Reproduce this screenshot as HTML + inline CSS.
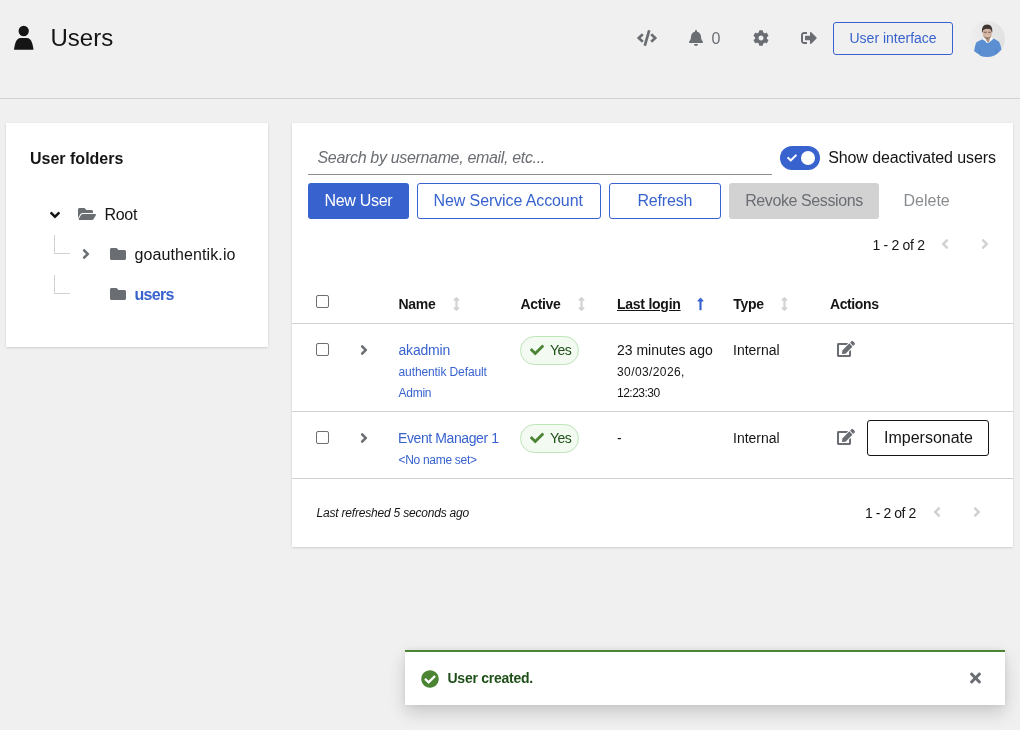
<!DOCTYPE html>
<html lang="en">
<head>
<meta charset="utf-8">
<title>Users</title>
<style>
*{box-sizing:border-box;margin:0;padding:0}
html,body{width:1020px;height:730px;overflow:hidden}
body{background:#f0f0f0;font-family:"Liberation Sans",sans-serif;color:#151515;font-size:16px;position:relative}
.wrap{position:absolute;left:0;top:0;width:1020px;height:730px;will-change:transform}
.abs{position:absolute}
.t{position:absolute;white-space:nowrap}
.hdr{position:absolute;left:0;top:0;width:1020px;height:99px;border-bottom:1px solid #d2d2d2}
.card{position:absolute;background:#fff;box-shadow:0 1px 2px 0 rgba(3,3,3,.12),0 0 2px 0 rgba(3,3,3,.06)}
.btn{position:absolute;border-radius:3px}
.b{font-weight:bold}
.blue{color:#3863ce}
.cb{position:absolute;width:13px;height:13px;border:1px solid #6e6e6e;border-radius:2px;background:#fff}
.hr{position:absolute;left:292px;width:721px;height:1px;background:#d2d2d2}
.pill{position:absolute;left:520px;width:59px;height:29px;border-radius:15px;background:#f3faf2;border:1px solid #bde5b8}
</style>
</head>
<body>
<svg width="0" height="0" style="position:absolute"><defs><symbol id="i-user" viewBox="0 0 448 512"><path d="M224 256c70.700 0 128-57.300 128-128S294.700 0 224 0 96 57.300 96 128s57.300 128 128 128zm89.600 32h-16.700c-22.200 10.200-46.900 16-72.900 16s-50.600-5.800-72.900-16h-16.700C60.200 288 0 348.200 0 422.400V464c0 26.500 21.500 48 48 48h352c26.500 0 48-21.500 48-48v-41.600c0-74.200-60.200-134.400-134.400-134.400z"/></symbol><symbol id="i-code" viewBox="0 0 640 512"><path d="M278.9 511.5l-61-17.700c-6.400-1.800-10-8.500-8.200-14.900L346.200 8.700c1.800-6.400 8.500-10 14.900-8.200l61 17.700c6.400 1.800 10 8.500 8.200 14.900L293.800 503.300c-1.900 6.400-8.500 10.100-14.900 8.200zm-114-112.200l43.500-46.400c4.600-4.900 4.300-12.700-.8-17.200L117 256l90.600-79.700c5.100-4.500 5.500-12.300.8-17.200l-43.500-46.400c-4.500-4.800-12.100-5.100-17-.5L3.800 247.200c-5.100 4.700-5.100 12.800 0 17.500l144.100 135.100c4.900 4.600 12.500 4.400 17-.5zm327.200.6l144.100-135.100c5.100-4.700 5.100-12.800 0-17.500L492.100 112.100c-4.800-4.500-12.400-4.300-17 .5L431.600 159c-4.600 4.900-4.300 12.700.8 17.200L523 256l-90.600 79.700c-5.100 4.500-5.500 12.300-.8 17.200l43.500 46.400c4.500 4.900 12.100 5.100 17 .6z"/></symbol><symbol id="i-bell" viewBox="0 0 448 512"><path d="M224 512c35.320 0 63.970-28.650 63.970-64H160.030c0 35.350 28.650 64 63.970 64zm215.390-149.710c-19.320-20.760-55.470-51.990-55.470-154.290 0-77.700-54.480-139.900-127.940-155.160V32c0-17.670-14.320-32-31.980-32s-31.980 14.330-31.980 32v20.840C118.560 68.100 64.080 130.300 64.080 208c0 102.300-36.150 133.530-55.470 154.290-6 6.450-8.660 14.160-8.610 21.710.11 16.400 12.980 32 32.100 32h383.800c19.120 0 32-15.600 32.100-32 .05-7.550-2.610-15.270-8.610-21.710z"/></symbol><symbol id="i-cog" viewBox="0 0 512 512"><path d="M487.400 315.700l-42.600-24.600c4.300-23.200 4.300-47 0-70.200l42.600-24.600c4.900-2.800 7.100-8.600 5.500-14-11.100-35.600-30-67.800-54.700-94.600-3.800-4.100-10-5.100-14.800-2.300L380.800 110c-17.900-15.400-38.500-27.300-60.800-35.100V25.800c0-5.600-3.900-10.500-9.400-11.700-36.700-8.200-74.300-7.800-109.200 0-5.500 1.200-9.400 6.100-9.400 11.700V75c-22.200 7.900-42.800 19.800-60.800 35.100L88.700 85.500c-4.900-2.800-11-1.900-14.800 2.300-24.700 26.700-43.600 58.900-54.700 94.600-1.700 5.400.6 11.200 5.500 14L67.300 221c-4.300 23.200-4.300 47 0 70.200l-42.600 24.600c-4.900 2.800-7.100 8.600-5.500 14 11.100 35.600 30 67.800 54.700 94.600 3.800 4.100 10 5.100 14.800 2.300l42.600-24.600c17.900 15.400 38.500 27.300 60.800 35.100v49.200c0 5.600 3.900 10.500 9.400 11.700 36.700 8.200 74.300 7.800 109.200 0 5.500-1.200 9.400-6.100 9.400-11.700v-49.200c22.200-7.900 42.800-19.800 60.800-35.100l42.600 24.600c4.900 2.800 11 1.900 14.800-2.300 24.700-26.700 43.600-58.900 54.700-94.600 1.500-5.500-.7-11.300-5.600-14.100zM256 336c-44.100 0-80-35.900-80-80s35.900-80 80-80 80 35.900 80 80-35.900 80-80 80z"/></symbol><symbol id="i-signout" viewBox="0 0 512 512"><path d="M497 273L329 441c-15 15-41 4.500-41-17v-96H152c-13.300 0-24-10.700-24-24v-96c0-13.300 10.700-24 24-24h136V88c0-21.400 25.900-32 41-17l168 168c9.300 9.400 9.300 24.600 0 34zM192 436v-40c0-6.600-5.400-12-12-12H96c-17.700 0-32-14.300-32-32V160c0-17.700 14.300-32 32-32h84c6.600 0 12-5.400 12-12V76c0-6.600-5.400-12-12-12H96c-53 0-96 43-96 96v192c0 53 43 96 96 96h84c6.600 0 12-5.400 12-12z"/></symbol><symbol id="i-folder" viewBox="0 0 512 512"><path d="M464 128H272l-64-64H48C21.490 64 0 85.490 0 112v288c0 26.510 21.490 48 48 48h416c26.510 0 48-21.490 48-48V176c0-26.510-21.490-48-48-48z"/></symbol><symbol id="i-folderopen" viewBox="0 0 576 512"><path d="M572.694 292.093L500.270 416.248A63.997 63.997 0 0 1 444.989 448H45.025c-18.523 0-30.064-20.093-20.731-36.093l72.424-124.155A64 64 0 0 1 152 256h399.964c18.523 0 30.064 20.093 20.730 36.093zM152 224h328v-48c0-26.510-21.490-48-48-48H272l-64-64H48C21.490 64 0 85.490 0 112v278.046l69.077-118.418C86.214 242.250 117.989 224 152 224z"/></symbol><symbol id="i-aright" viewBox="0 0 256 512"><path d="M224.300 273l-136 136c-9.400 9.400-24.600 9.400-33.900 0l-22.600-22.600c-9.400-9.400-9.400-24.600 0-33.900l96.400-96.400-96.400-96.400c-9.400-9.400-9.400-24.600 0-33.900L54.300 103c9.400-9.400 24.600-9.400 33.900 0l136 136c9.500 9.400 9.500 24.600.1 34z"/></symbol><symbol id="i-adown" viewBox="0 0 320 512"><path d="M143 352.300L7 216.300c-9.400-9.400-9.400-24.600 0-33.900l22.600-22.600c9.400-9.400 24.600-9.400 33.900 0l96.400 96.400 96.400-96.400c9.400-9.400 24.600-9.400 33.900 0l22.600 22.600c9.400 9.400 9.400 24.600 0 33.900l-136 136c-9.200 9.400-24.400 9.400-33.800 0z"/></symbol><symbol id="i-aleft" viewBox="0 0 256 512"><path d="M31.700 239l136-136c9.400-9.400 24.600-9.400 33.900 0l22.600 22.600c9.400 9.400 9.400 24.600 0 33.900L127.900 256l96.400 96.400c9.400 9.400 9.400 24.600 0 33.900L201.700 409c-9.400 9.400-24.600 9.400-33.900 0l-136-136c-9.500-9.400-9.500-24.600-.1-34z"/></symbol><symbol id="i-check" viewBox="0 0 512 512"><path d="M173.898 439.404l-166.400-166.400c-9.997-9.997-9.997-26.206 0-36.204l36.203-36.204c9.997-9.998 26.207-9.998 36.204 0L192 312.690 432.095 72.596c9.997-9.997 26.207-9.997 36.204 0l36.203 36.204c9.997 9.997 9.997 26.206 0 36.204l-294.400 294.401c-9.998 9.997-26.207 9.997-36.204-.001z"/></symbol><symbol id="i-checkcircle" viewBox="0 0 512 512"><path d="M504 256c0 136.967-111.033 248-248 248S8 392.967 8 256 119.033 8 256 8s248 111.033 248 248zM227.314 387.314l184-184c6.248-6.248 6.248-16.379 0-22.627l-22.627-22.627c-6.248-6.249-16.379-6.249-22.628 0L216 308.118l-70.059-70.059c-6.248-6.248-16.379-6.248-22.628 0l-22.627 22.627c-6.248 6.248-6.248 16.379 0 22.627l104 104c6.249 6.249 16.379 6.249 22.628.001z"/></symbol><symbol id="i-times" viewBox="0 0 352 512"><path d="M242.720 256l100.070-100.070c12.280-12.280 12.280-32.190 0-44.480l-22.240-22.240c-12.280-12.280-32.190-12.280-44.480 0L176 189.280 75.930 89.210c-12.280-12.280-32.190-12.280-44.480 0L9.210 111.450c-12.280 12.280-12.280 32.190 0 44.480L109.280 256 9.210 356.070c-12.280 12.280-12.280 32.190 0 44.480l22.240 22.240c12.280 12.280 32.200 12.280 44.480 0L176 322.720l100.070 100.070c12.280 12.280 32.200 12.280 44.480 0l22.240-22.240c12.280-12.280 12.280-32.190 0-44.480L242.720 256z"/></symbol><symbol id="i-edit" viewBox="0 0 576 512"><path d="M402.600 83.200l90.200 90.200c3.800 3.800 3.800 10 0 13.800L274.400 405.600l-92.800 10.300c-12.400 1.400-22.900-9.100-21.500-21.500l10.300-92.800L388.800 83.200c3.800-3.800 10-3.800 13.800 0zm162-22.900l-48.800-48.800c-15.200-15.200-39.900-15.200-55.200 0l-35.400 35.400c-3.800 3.800-3.800 10 0 13.800l90.200 90.200c3.800 3.800 10 3.800 13.800 0l35.400-35.400c15.200-15.300 15.200-40 0-55.200zM384 346.200V448H64V128h229.800c3.200 0 6.200-1.300 8.500-3.500l40-40c7.600-7.600 2.200-20.500-8.500-20.500H48C21.500 64 0 85.500 0 112v352c0 26.500 21.500 48 48 48h352c26.500 0 48-21.500 48-48V306.200c0-10.700-12.900-16-20.500-8.500l-40 40c-2.200 2.300-3.500 5.300-3.500 8.500z"/></symbol><symbol id="i-up" viewBox="0 0 256 512"><path d="M88 166.059V468c0 6.627 5.373 12 12 12h56c6.627 0 12-5.373 12-12V166.059h46.059c21.382 0 32.090-25.851 16.971-40.971l-86.059-86.059c-9.373-9.373-24.569-9.373-33.941 0l-86.059 86.059c-15.119 15.119-4.411 40.971 16.971 40.971H88z"/></symbol><symbol id="i-updown" viewBox="0 0 256 512"><path d="M214.059 377.941H168V134.059h46.059c21.382 0 32.090-25.851 16.971-40.971L144.971 7.029c-9.373-9.373-24.568-9.373-33.941 0L24.971 93.088c-15.119 15.119-4.411 40.971 16.971 40.971H88v243.882H41.941c-21.382 0-32.090 25.851-16.971 40.971l86.059 86.059c9.373 9.373 24.568 9.373 33.941 0l86.059-86.059c15.120-15.119 4.412-40.971-16.970-40.971z"/></symbol></defs></svg>
<div class="wrap">
<div class="hdr"></div>
<svg class="abs" style="left:10px;top:22px" width="28" height="32" viewBox="10 22 28 32"><circle cx="23.700" cy="31" r="5.150" fill="#151515"/><path d="M14 49.800 L33.500 49.800 C33 45.500 31.800 38 26.800 38 L20.700 38 C15.700 38 14.500 45.500 14 49.800 Z" fill="#151515"/></svg>
<div class="t " style="left:50.5px;top:13.68px;font-size:24px;line-height:48px;height:48px;">Users</div>
<svg class="abs" style="left:637px;top:30px;fill:#6a6e73" width="20" height="16"><use href="#i-code"/></svg>
<svg class="abs" style="left:689px;top:30px;fill:#6a6e73" width="14" height="16"><use href="#i-bell"/></svg>
<div class="t " style="left:711.5px;top:23.46px;font-size:16px;line-height:32px;height:32px;color:#6a6e73">0</div>
<svg class="abs" style="left:753px;top:30px;fill:#6a6e73" width="16" height="16"><use href="#i-cog"/></svg>
<svg class="abs" style="left:801px;top:30px;fill:#6a6e73" width="16" height="16"><use href="#i-signout"/></svg>
<div class="btn" style="left:833px;top:22px;width:120px;height:33px;border:1px solid #3863ce"></div>
<div class="t " style="left:849.5px;top:24.15px;font-size:14px;line-height:28px;height:28px;color:#3863ce">User interface</div>
<svg class="abs" style="left:969px;top:21px" width="36" height="36" viewBox="0 0 36 36"><defs><clipPath id="av"><circle cx="18" cy="18" r="18"/></clipPath><linearGradient id="avbg" x1="0" x2="1" y1="0" y2="0"><stop offset="0" stop-color="#efefef"/><stop offset="1" stop-color="#e1e1e1"/></linearGradient><filter id="avb" x="-10%" y="-10%" width="120%" height="120%"><feGaussianBlur stdDeviation="0.35"/></filter></defs><g clip-path="url(#av)"><rect width="36" height="36" fill="url(#avbg)"/><g filter="url(#avb)"><path d="M13.300 18.200 L7.500 21.300 Q6 24 5.100 30.200 L9.600 33.300 L10.600 33 L10.600 36.500 L27.400 36.500 L27.400 33.300 L27.700 33.600 L32.500 28.800 Q31.500 23 29.800 20.600 L24.600 17.500 Z" fill="#5c8fd1"/><path d="M10.600 28 L10.600 33.500 M27.300 28 L27.300 33.500" stroke="#4a78b8" stroke-width="0.6" fill="none"/><path d="M13.300 18.300 L15.500 16.600 L18.500 20 L22 16.400 L24.600 17.400 L22 20 L19.500 21.800 L17.500 22 L16.500 20.300 Z" fill="#f6f6f6"/><path d="M16.800 17 L20.900 17 L20.600 19.500 L19 21.700 L17.600 19.800 Z" fill="#b08f7c"/><ellipse cx="18.300" cy="12.400" rx="4.500" ry="5.700" fill="#d2b3a2"/><path d="M12.900 11.500 Q12.300 3.600 18.100 3.500 Q24 3.600 23.300 11.500 L22.600 11 Q22.600 7.800 18.200 7.700 Q13.800 7.800 13.600 11.200 Z" fill="#3f3633"/><path d="M15.200 11.300 L17.300 11.300 M19.600 11.300 L21.600 11.300" stroke="#6e574d" stroke-width="0.9" stroke-linecap="round"/><path d="M16.800 14.600 Q18.400 15.500 20.200 14.600" stroke="#e6d6cf" stroke-width="0.6" fill="none"/><path d="M14.600 15.300 Q18.300 20.500 22 15.300 Q18.300 18 14.600 15.300Z" fill="#7a6052"/></g></g></svg>
<div class="card" style="left:6px;top:123px;width:262px;height:224px"></div>
<div class="card" style="left:292px;top:123px;width:721px;height:424px"></div>
<div class="t b" style="left:30px;top:143.46px;font-size:16px;line-height:32px;height:32px;">User folders</div>
<svg class="abs" style="left:50px;top:207px;fill:#151515" width="10" height="16"><use href="#i-adown"/></svg>
<svg class="abs" style="left:78px;top:206px;fill:#6a6e73" width="18" height="16"><use href="#i-folderopen"/></svg>
<div class="t " style="left:104.5px;top:199.46px;font-size:16px;line-height:32px;height:32px;letter-spacing:-0.3px">Root</div>
<div class="abs" style="left:54px;top:235px;width:16px;height:19px;border-left:1px solid #d2d2d2;border-bottom:1px solid #d2d2d2"></div>
<div class="abs" style="left:54px;top:275px;width:16px;height:19px;border-left:1px solid #d2d2d2;border-bottom:1px solid #d2d2d2"></div>
<svg class="abs" style="left:81.5px;top:246px;fill:#6a6e73" width="8" height="16"><use href="#i-aright"/></svg>
<svg class="abs" style="left:110px;top:246px;fill:#6a6e73" width="16" height="16"><use href="#i-folder"/></svg>
<div class="t " style="left:134.5px;top:239.46px;font-size:16px;line-height:32px;height:32px;letter-spacing:0.1px">goauthentik.io</div>
<svg class="abs" style="left:110px;top:286px;fill:#6a6e73" width="16" height="16"><use href="#i-folder"/></svg>
<div class="t b blue" style="left:134.5px;top:279.46px;font-size:16px;line-height:32px;height:32px;letter-spacing:-0.7px">users</div>
<div class="t " style="left:317.5px;top:142.46px;font-size:16px;line-height:32px;height:32px;letter-spacing:-0.33px;font-style:italic;color:#6a6e73">Search by username, email, etc...</div>
<div class="abs" style="left:308px;top:174px;width:464px;height:1px;background:#8a8d90"></div>
<div class="abs" style="left:780px;top:146px;width:40px;height:24px;border-radius:12px;background:#3863ce"></div>
<div class="abs" style="left:801px;top:151px;width:14px;height:14px;border-radius:7px;background:#fff"></div>
<svg class="abs" style="left:787.3px;top:153.3px;fill:#fff" width="10" height="10"><use href="#i-check"/></svg>
<div class="t " style="left:828.2px;top:141.96px;font-size:16px;line-height:32px;height:32px;letter-spacing:-0.1px">Show deactivated users</div>
<div class="btn" style="left:308px;top:183px;width:101px;height:36px;background:#3863ce"></div>
<div class="t " style="left:324.5px;top:185.46px;font-size:16px;line-height:32px;height:32px;letter-spacing:-0.3px;color:#fff">New User</div>
<div class="btn" style="left:417px;top:183px;width:184px;height:36px;border:1px solid #3863ce"></div>
<div class="t " style="left:433.5px;top:185.46px;font-size:16px;line-height:32px;height:32px;letter-spacing:-0.1px;color:#3863ce">New Service Account</div>
<div class="btn" style="left:609px;top:183px;width:112px;height:36px;border:1px solid #3863ce"></div>
<div class="t " style="left:637.5px;top:185.46px;font-size:16px;line-height:32px;height:32px;letter-spacing:-0.2px;color:#3863ce">Refresh</div>
<div class="btn" style="left:729px;top:183px;width:150px;height:36px;background:#d2d2d2"></div>
<div class="t " style="left:745.2px;top:185.46px;font-size:16px;line-height:32px;height:32px;letter-spacing:-0.4px;color:#6a6e73">Revoke Sessions</div>
<div class="t " style="left:903.5px;top:185.46px;font-size:16px;line-height:32px;height:32px;color:#8a8d90">Delete</div>
<div class="t " style="left:872.5px;top:231.15px;font-size:14px;line-height:28px;height:28px;letter-spacing:-0.3px">1 - 2 of 2</div>
<svg class="abs" style="left:941px;top:236.2px;fill:#d2d2d2" width="8" height="16"><use href="#i-aleft"/></svg>
<svg class="abs" style="left:981.4px;top:236.2px;fill:#d2d2d2" width="8" height="16"><use href="#i-aright"/></svg>
<div class="cb" style="left:316px;top:295px"></div>
<div class="t b" style="left:398.5px;top:290.15px;font-size:14px;line-height:28px;height:28px;letter-spacing:-0.3px">Name</div>
<svg class="abs" style="left:452.5px;top:297px;fill:#d2d2d2" width="7" height="14"><use href="#i-updown"/></svg>
<div class="t b" style="left:520.5px;top:290.15px;font-size:14px;line-height:28px;height:28px;letter-spacing:-0.35px">Active</div>
<svg class="abs" style="left:578px;top:297px;fill:#d2d2d2" width="7" height="14"><use href="#i-updown"/></svg>
<div class="t b" style="left:617px;top:290.15px;font-size:14px;line-height:28px;height:28px;text-decoration:underline;letter-spacing:-0.25px">Last login</div>
<svg class="abs" style="left:696.5px;top:297px;fill:#3863ce" width="7" height="14"><use href="#i-up"/></svg>
<div class="t b" style="left:733.2px;top:290.15px;font-size:14px;line-height:28px;height:28px;letter-spacing:-0.3px">Type</div>
<svg class="abs" style="left:781px;top:297px;fill:#d2d2d2" width="7" height="14"><use href="#i-updown"/></svg>
<div class="t b" style="left:830px;top:290.15px;font-size:14px;line-height:28px;height:28px;letter-spacing:-0.4px">Actions</div>
<div class="hr" style="top:323px"></div>
<div class="cb" style="left:316px;top:343px"></div>
<svg class="abs" style="left:359.5px;top:342px;fill:#6a6e73" width="8" height="16"><use href="#i-aright"/></svg>
<div class="t blue" style="left:398.5px;top:335.65px;font-size:14px;line-height:28px;height:28px;letter-spacing:-0.2px">akadmin</div>
<div class="t blue" style="left:398.5px;top:359.84px;font-size:12px;line-height:24px;height:24px;letter-spacing:-0.1px">authentik Default</div>
<div class="t blue" style="left:398.5px;top:380.84px;font-size:12px;line-height:24px;height:24px;letter-spacing:-0.25px">Admin</div>
<div class="pill" style="top:336px"></div>
<svg class="abs" style="left:530.3px;top:342.7px;fill:#4b8534" width="14" height="14"><use href="#i-check"/></svg>
<div class="t " style="left:550px;top:335.65px;font-size:14px;line-height:28px;height:28px;color:#1e4f18;letter-spacing:-0.6px">Yes</div>
<div class="t " style="left:617px;top:335.65px;font-size:14px;line-height:28px;height:28px;">23 minutes ago</div>
<div class="t " style="left:617px;top:359.84px;font-size:12px;line-height:24px;height:24px;letter-spacing:0.4px">30/03/2026,</div>
<div class="t " style="left:617px;top:380.84px;font-size:12px;line-height:24px;height:24px;letter-spacing:-0.5px">12:23:30</div>
<div class="t " style="left:733px;top:335.65px;font-size:14px;line-height:28px;height:28px;">Internal</div>
<svg class="abs" style="left:837.3px;top:341px;fill:#6a6e73" width="18" height="16"><use href="#i-edit"/></svg>
<div class="hr" style="top:411px"></div>
<div class="cb" style="left:316px;top:431px"></div>
<svg class="abs" style="left:359.5px;top:430px;fill:#6a6e73" width="8" height="16"><use href="#i-aright"/></svg>
<div class="t blue" style="left:398px;top:423.65px;font-size:14px;line-height:28px;height:28px;letter-spacing:-0.4px">Event Manager 1</div>
<div class="t blue" style="left:398.5px;top:447.84px;font-size:12px;line-height:24px;height:24px;letter-spacing:-0.3px">&lt;No name set&gt;</div>
<div class="pill" style="top:424px"></div>
<svg class="abs" style="left:530.3px;top:430.7px;fill:#4b8534" width="14" height="14"><use href="#i-check"/></svg>
<div class="t " style="left:550px;top:423.65px;font-size:14px;line-height:28px;height:28px;color:#1e4f18;letter-spacing:-0.6px">Yes</div>
<div class="t " style="left:617px;top:423.65px;font-size:14px;line-height:28px;height:28px;">-</div>
<div class="t " style="left:733px;top:423.65px;font-size:14px;line-height:28px;height:28px;">Internal</div>
<svg class="abs" style="left:837.3px;top:429px;fill:#6a6e73" width="18" height="16"><use href="#i-edit"/></svg>
<div class="btn" style="left:867px;top:420px;width:122px;height:36px;border:1px solid #151515"></div>
<div class="t " style="left:884px;top:422.46px;font-size:16px;line-height:32px;height:32px;">Impersonate</div>
<div class="hr" style="top:478px"></div>
<div class="t " style="left:316.5px;top:500.84px;font-size:12px;line-height:24px;height:24px;letter-spacing:-0.2px;font-style:italic">Last refreshed 5 seconds ago</div>
<div class="t " style="left:865px;top:499.15px;font-size:14px;line-height:28px;height:28px;letter-spacing:-0.45px">1 - 2 of 2</div>
<svg class="abs" style="left:933px;top:504.4px;fill:#d2d2d2" width="8" height="16"><use href="#i-aleft"/></svg>
<svg class="abs" style="left:973px;top:504.4px;fill:#d2d2d2" width="8" height="16"><use href="#i-aright"/></svg>
<div class="abs" style="left:405px;top:650px;width:600px;height:55px;background:#fff;border-top:2px solid #4b8534;box-shadow:0 8px 16px 0 rgba(3,3,3,.16),0 0 6px 0 rgba(3,3,3,.08)"></div>
<svg class="abs" style="left:421px;top:669.5px;fill:#4b8534" width="18" height="18"><use href="#i-checkcircle"/></svg>
<div class="t b" style="left:447.5px;top:663.85px;font-size:14px;line-height:28px;height:28px;color:#1e4f18;letter-spacing:-0.25px">User created.</div>
<svg class="abs" style="left:970px;top:669.7px;fill:#6a6e73" width="11" height="16"><use href="#i-times"/></svg>
</div>
</body>
</html>
